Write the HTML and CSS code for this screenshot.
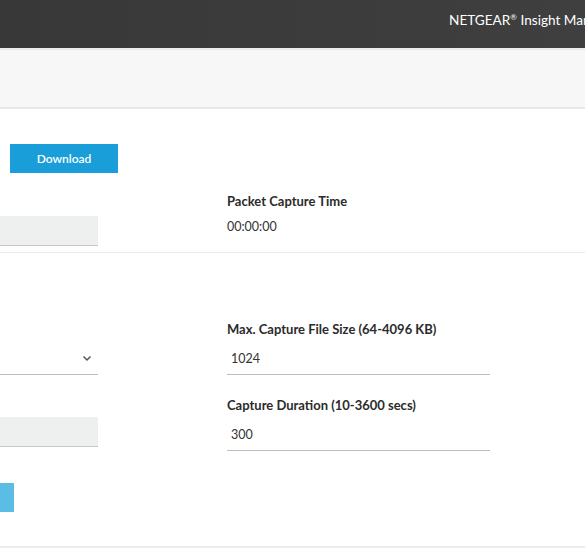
FILE: index.html
```html
<!DOCTYPE html>
<html>
<head>
<meta charset="utf-8">
<link rel="stylesheet" href="styles.css">
</head>
<body>
<header class="topbar">
  <div class="brand">NETGEAR<sup>®</sup> Insight Manager</div>
</header>
<div class="subbar"></div>
<main>
  <section class="sec sec1">
    <div class="btn-row"><button class="btn-download">Download</button></div>
    <div class="grid g1">
      <div class="cell left">
        <div class="gray-input"></div>
      </div>
      <div class="cell right">
        <div class="label">Packet Capture Time</div>
        <div class="value">00:00:00</div>
      </div>
    </div>
  </section>
  <section class="sec sec2">
    <div class="grid g2">
      <div class="cell left">
        <div class="select">
          <svg class="chev" width="10" height="7" viewBox="0 0 10 7"><path d="M1.5 1.5 L5 5 L8.5 1.5" fill="none" stroke="#555" stroke-width="1.5"/></svg>
        </div>
      </div>
      <div class="cell right">
        <div class="label">Max. Capture File Size (64-4096 KB)</div>
        <div class="field">1024</div>
      </div>
      <div class="cell left">
        <div class="gray-input gi2"></div>
      </div>
      <div class="cell right">
        <div class="label">Capture Duration (10-3600 secs)</div>
        <div class="field">300</div>
      </div>
    </div>
    <div class="btn2-row"><div class="btn-light"></div></div>
  </section>
</main>
</body>
</html>
```
FILE: styles.css
```css
* { box-sizing: border-box; }
html, body { margin: 0; padding: 0; }
body {
  width: 585px;
  height: 550px;
  overflow: hidden;
  background: #fff;
  font-family: "Lato", "Open Sans", sans-serif;
  color: #333;
}
.topbar {
  height: 48px;
  background: linear-gradient(90deg, #383838 0%, #3f3f3f 100%);
  display: flex;
  align-items: center;
  padding-left: 449px;
  white-space: nowrap;
  overflow: hidden;
}
.brand {
  color: #fff;
  font-size: 13.6px;
  margin-top: -8px;
}
.brand sup { font-size: 8px; vertical-align: 5px; }
.subbar {
  height: 61px;
  background: #f7f7f7;
  border-top: 2px solid #ececec;
  border-bottom: 2px solid #e8e8e8;
}
.sec1 {
  padding-top: 35px;
  height: 144px;
  border-bottom: 1px solid #e9e9e9;
}
.btn-row { padding-left: 10px; }
.btn-download {
  width: 108px;
  height: 29px;
  background: #1a9ed9;
  border: 0;
  border-radius: 0;
  color: #fff;
  font-family: inherit;
  font-size: 12px;
  font-weight: 600;
  padding: 0;
}
.grid {
  display: grid;
  grid-template-columns: 98px 263px;
  column-gap: 129px;
}
.g1 { margin-top: 20px; }
.g1 .cell.left { padding-top: 23px; }
.gray-input {
  height: 30px;
  background: #eef0f0;
  border-bottom: 1px solid #c8c8c8;
}
.label {
  font-weight: 700;
  font-size: 13px;
  color: #2b2b2b;
  line-height: 16px;
}
.value {
  font-size: 12.5px;
  margin-top: 10px;
  line-height: 16px;
  color: #333;
}
.sec2 {
  height: 295px;
  border-bottom: 2px solid #ececec;
  padding-top: 68px;
}
.g2 { row-gap: 22px; }
.g2 .cell.left { display: flex; flex-direction: column; justify-content: flex-end; }
.select {
  height: 30px;
  border-bottom: 1px solid #bdbdbd;
  position: relative;
}
.chev { position: absolute; right: 6px; top: 10px; }
.field {
  margin-top: 14px;
  height: 24px;
  padding-left: 4px;
  font-size: 12.5px;
  line-height: 16px;
  border-bottom: 1px solid #bdbdbd;
}
.gi2 { margin-bottom: 4px; }
.btn2-row { margin-top: 32px; }
.btn-light {
  width: 14px;
  height: 29px;
  background: #5bbde5;
}
```
